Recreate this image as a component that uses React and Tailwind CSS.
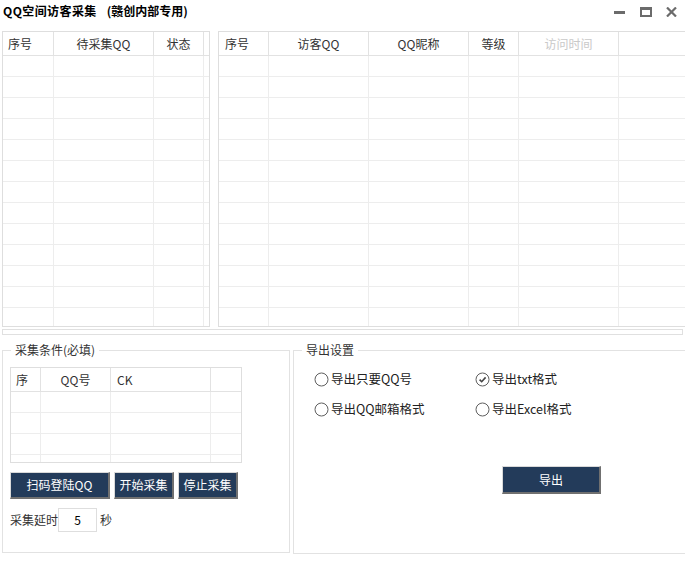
import React from "react";

const leftCols = [
  { w: "w-[51px]", label: "序号", cls: "justify-start pl-[5px]" },
  { w: "w-[100px]", label: "待采集QQ", cls: "justify-center" },
  { w: "w-[50px]", label: "状态", cls: "justify-center" },
  { w: "flex-1 border-r-0", label: "", cls: "" },
];

const rightCols = [
  { w: "w-[50px]", label: "序号", cls: "justify-start pl-[6px]" },
  { w: "w-[100px]", label: "访客QQ", cls: "justify-center" },
  { w: "w-[100px]", label: "QQ昵称", cls: "justify-center" },
  { w: "w-[50px]", label: "等级", cls: "justify-center" },
  { w: "w-[100px]", label: "访问时间", cls: "justify-center text-[#c9c9c9]" },
  { w: "flex-1 border-r-0", label: "", cls: "" },
];

const smallCols = [
  { w: "w-[30px]", label: "序", cls: "justify-start pl-[5px]" },
  { w: "w-[70px]", label: "QQ号", cls: "justify-center" },
  { w: "w-[100px]", label: "CK", cls: "justify-start pl-[6px]" },
  { w: "flex-1 border-r-0", label: "", cls: "" },
];

function Grid({ cols, rows, outer }) {
  return (
    <div className={"border border-[#dedede] overflow-hidden flex flex-col shrink-0 bg-white " + outer}>
      <div className="flex h-[24px] shrink-0 border-b border-[#e2e2e2]">
        {cols.map((c, i) => (
          <div
            key={i}
            className={"h-full flex items-center border-r border-[#e2e2e2] text-[12px] leading-[14px] text-[#333] shrink-0 " + c.w + " " + c.cls}
          >
            {c.label}
          </div>
        ))}
      </div>
      {Array.from({ length: rows }).map((_, r) => (
        <div key={r} className="flex h-[21px] shrink-0 border-b border-[#ededed]">
          {cols.map((c, i) => (
            <div key={i} className={"h-full border-r border-[#ededed] shrink-0 " + c.w} />
          ))}
        </div>
      ))}
    </div>
  );
}

function NavyButton({ children, cls }) {
  return (
    <button
      className={"bg-[#233b5a] text-white text-[12px] leading-[14px] flex items-center justify-center border-t border-l border-t-[#d9d9d9] border-l-[#d9d9d9] border-b-2 border-r-2 border-b-[#707070] border-r-[#707070] " + cls}
    >
      {children}
    </button>
  );
}

function Radio({ checked, label }) {
  return (
    <div className="flex items-center h-[20px]">
      <svg width="15" height="15" viewBox="0 0 15 15" className="shrink-0">
        <circle cx="7.5" cy="7.5" r="6.5" fill="white" stroke="#5f5f5f" strokeWidth="1" />
        {checked && (
          <path d="M4.6 7.6 L6.7 9.7 L10.6 5.4" fill="none" stroke="#444" strokeWidth="1.6" />
        )}
      </svg>
      <span className="ml-[2px] text-[12.5px] leading-[14px] text-[#222]">{label}</span>
    </div>
  );
}

export default function App() {
  return (
    <div className="w-[685px] h-[573px] overflow-hidden bg-white relative font-['Noto_Sans_CJK_SC',sans-serif] text-[#333]">
      {/* title bar */}
      <div className="h-[31px] flex items-start justify-between">
        <div className="pl-[3px] pt-[4px] text-[12px] leading-[14px] font-bold text-black whitespace-nowrap flex">
          <span className="tracking-[0.4px]">QQ空间访客采集</span>
          <span className="ml-[10px]">(赣创内部专用)</span>
        </div>
        <div className="flex items-center pt-[7px] pr-[8px]">
          <svg width="11" height="10" viewBox="0 0 11 10">
            <rect x="0" y="4" width="11" height="3" fill="#6b6b6b" />
          </svg>
          <svg width="12" height="10" viewBox="0 0 12 10" className="ml-[15px]">
            <rect x="0" y="0" width="12" height="10" fill="#6b6b6b" />
            <rect x="2" y="3" width="8" height="5" fill="white" />
          </svg>
          <svg width="11" height="10" viewBox="0 0 11 10" className="ml-[14px]">
            <path d="M1 0.5 L10 9.5 M10 0.5 L1 9.5" stroke="#6b6b6b" strokeWidth="2.2" />
          </svg>
        </div>
      </div>

      {/* tables */}
      <div className="flex gap-[8px] pl-[2px]">
        <Grid cols={leftCols} rows={14} outer="w-[208px] h-[296px]" />
        <Grid cols={rightCols} rows={14} outer="w-[520px] h-[296px]" />
      </div>

      {/* bar */}
      <div className="mt-[2px] ml-[2px] w-[681px] h-[6px] border border-[#e0e0e0]" />

      {/* bottom */}
      <div className="flex gap-[3px] pl-[2px] mt-[7px]">
        <fieldset className="w-[288px] h-[211px] border border-[#e2e2e2] shrink-0">
          <legend className="ml-[8px] px-[4px] text-[12px] leading-[16px] text-[#333]">采集条件(必填)</legend>
          <div className="mt-[9px] ml-[7px]">
            <Grid cols={smallCols} rows={4} outer="w-[232px] h-[96px]" />
          </div>
          <div className="mt-[9px] ml-[7px] flex gap-[4px]">
            <NavyButton cls="w-[100px] h-[27px]">扫码登陆QQ</NavyButton>
            <NavyButton cls="w-[60px] h-[27px]">开始采集</NavyButton>
            <NavyButton cls="w-[60px] h-[27px]">停止采集</NavyButton>
          </div>
          <div className="mt-[9px] ml-[7px] flex items-center">
            <span className="text-[12px] leading-[14px] text-[#333]">采集延时</span>
            <div className="w-[39px] h-[24px] border border-[#dedede] flex items-center justify-center text-[12px] text-black">
              5
            </div>
            <span className="ml-[3px] text-[12px] leading-[14px] text-[#333]">秒</span>
          </div>
        </fieldset>

        <fieldset className="w-[420px] h-[212px] border border-[#e2e2e2] shrink-0">
          <legend className="ml-[8px] px-[4px] text-[12px] leading-[16px] text-[#333]">导出设置</legend>
          <div className="mt-[11px] pl-[20px] grid grid-cols-[161px_161px] gap-y-[10px]">
            <Radio label="导出只要QQ号" />
            <Radio checked label="导出txt格式" />
            <Radio label="导出QQ邮箱格式" />
            <Radio label="导出Excel格式" />
          </div>
          <div className="mt-[47px] ml-[208px]">
            <NavyButton cls="w-[99px] h-[28px]">导出</NavyButton>
          </div>
        </fieldset>
      </div>
    </div>
  );
}
